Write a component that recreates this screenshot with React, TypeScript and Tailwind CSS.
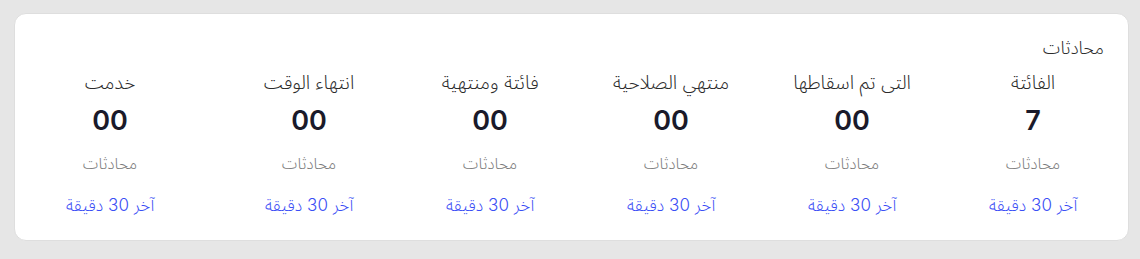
import React from "react";

const items = [
  { title: "الفائتة", value: "7" },
  { title: "التى تم اسقاطها", value: "00" },
  { title: "منتهي الصلاحية", value: "00" },
  { title: "فائتة ومنتهية", value: "00" },
  { title: "انتهاء الوقت", value: "00" },
  { title: "خدمت", value: "00" },
];

export default function App() {
  return (
    <div
      dir="rtl"
      className="h-[259px] w-[1140px] bg-[#e6e6e6] pt-[13px] pr-[11px] pl-[14px]"
      style={{ fontFamily: 'Inter, "Noto Sans Arabic", "DejaVu Sans", sans-serif' }}
    >
      <div className="h-[228px] rounded-xl border border-[#dedede] bg-white px-6 pt-5">
        <div className="text-[18px] font-light leading-[28px] text-[#2b2b2b]">محادثات</div>
        <div className="mt-[7px] flex gap-[39px]">
          {items.map((it, i) => (
            <div
              key={i}
              className={
                "flex w-[142px] shrink-0 flex-col items-center text-center" +
                (i === 5 ? " ms-[18px]" : "")
              }
            >
              <div className="whitespace-nowrap text-[19px] font-light leading-[28px] text-[#2b2b2b]">{it.title}</div>
              <div className="mt-[6px] text-[27px] font-semibold leading-[36px] text-[#1a1a2a]">{it.value}</div>
              <div className="mt-[12px] text-[16px] font-light leading-[24px] text-[#7a7a7a]">محادثات</div>
              <div className="mt-[18px] whitespace-nowrap text-[17px] font-light leading-[24px] text-[#3b4ef5]">آخر 30 دقيقة</div>
            </div>
          ))}
        </div>
      </div>
    </div>
  );
}
